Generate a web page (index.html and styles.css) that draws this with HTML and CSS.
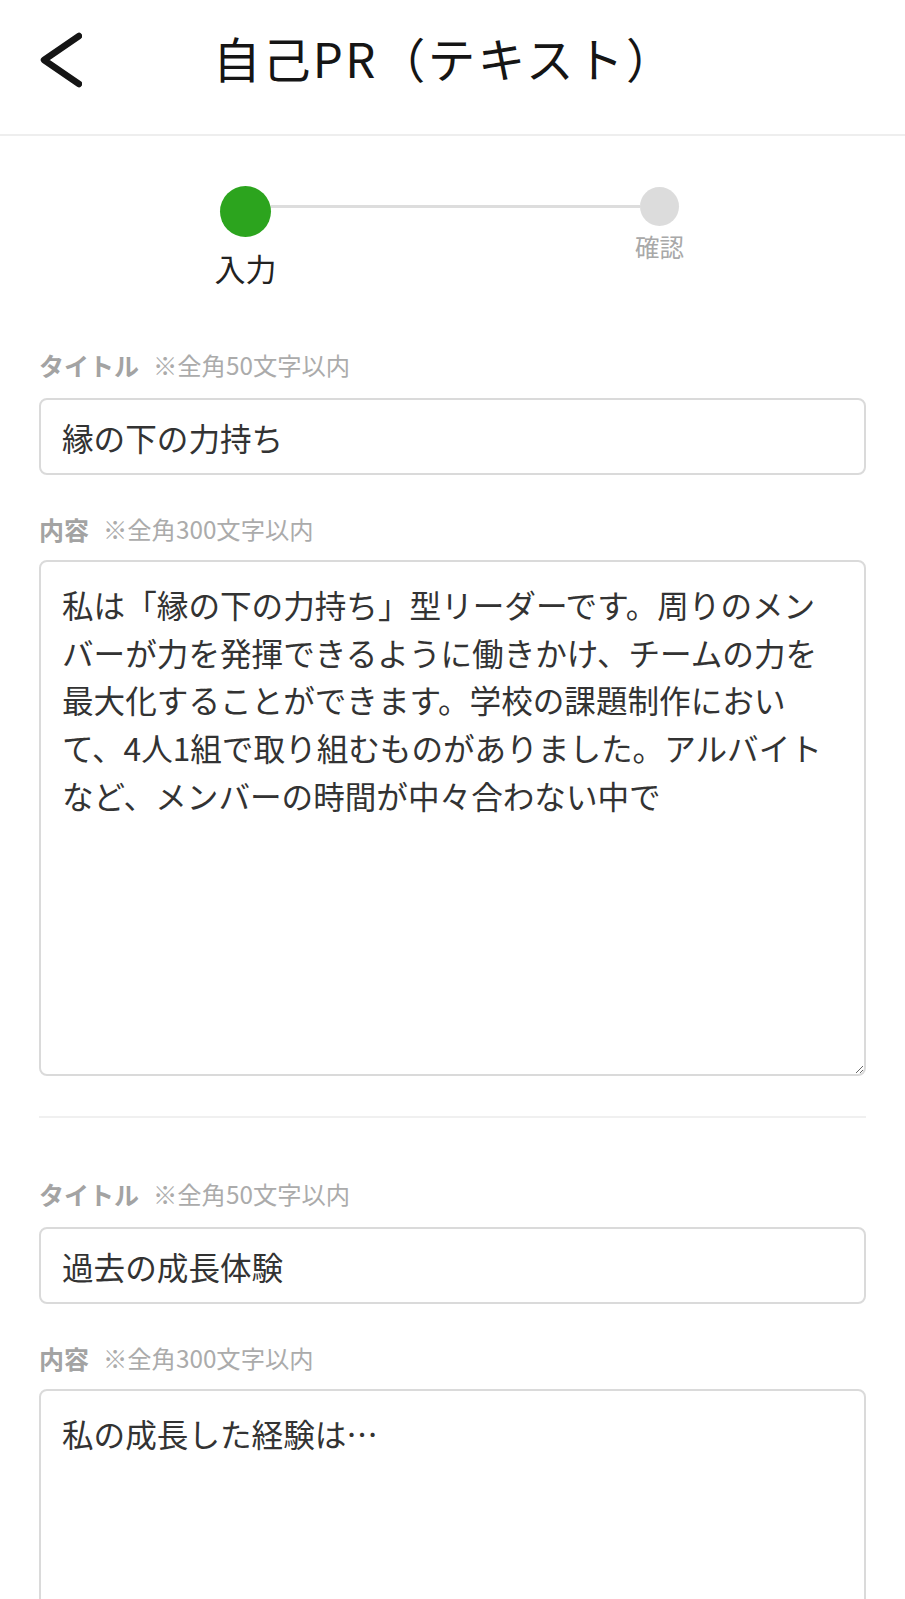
FILE: index.html
```html
<!DOCTYPE html>
<html lang="ja">
<head>
<meta charset="utf-8">
<title>自己PR（テキスト）</title>
<link rel="stylesheet" href="styles.css">
</head>
<body>
<header class="header">
  <svg class="back" width="44" height="60" viewBox="0 0 44 60" aria-hidden="true">
    <path d="M41 6 L6 30 L41 54" fill="none" stroke="#151515" stroke-width="6.5" stroke-linecap="round" stroke-linejoin="round"/>
  </svg>
  <h1 class="title">自己PR（テキスト）</h1>
</header>

<div class="stepper">
  <div class="step step-active">
    <span class="dot"></span>
    <span class="step-label">入力</span>
  </div>
  <div class="line"></div>
  <div class="step step-next">
    <span class="dot"></span>
    <span class="step-label">確認</span>
  </div>
</div>

<main class="form">
  <section class="entry">
    <div class="field-label label-title label-first"><b>タイトル</b><span class="note">※全角50文字以内</span></div>
    <input class="text-input" type="text" value="縁の下の力持ち">
    <div class="field-label label-content"><b>内容</b><span class="note">※全角300文字以内</span></div>
    <textarea class="text-area">私は「縁の下の力持ち」型リーダーです。周りのメンバーが力を発揮できるように働きかけ、チームの力を最大化することができます。学校の課題制作において、4人1組で取り組むものがありました。アルバイトなど、メンバーの時間が中々合わない中で</textarea>
  </section>
  <hr class="divider">
  <section class="entry">
    <div class="field-label label-title label-first"><b>タイトル</b><span class="note">※全角50文字以内</span></div>
    <input class="text-input" type="text" value="過去の成長体験">
    <div class="field-label label-content"><b>内容</b><span class="note">※全角300文字以内</span></div>
    <textarea class="text-area">私の成長した経験は…</textarea>
  </section>
</main>
</body>
</html>
```

FILE: styles.css
```css
* { box-sizing: border-box; }

html, body {
  margin: 0;
  padding: 0;
  background: #fff;
}

body {
  font-family: "Noto Sans CJK JP", "Noto Sans", sans-serif;
  color: #333;
  width: 905px;
}

.header {
  height: 136px;
  border-bottom: 2px solid #eeeeee;
  display: flex;
  align-items: flex-start;
}

.back {
  margin-left: 38px;
  margin-top: 30px;
  flex: none;
}

.title {
  margin: 0 0 0 131px;
  padding-top: 28px;
  font-size: 47.5px;
  line-height: 60px;
  font-weight: 400;
  letter-spacing: 2.4px;
  color: #151515;
  white-space: nowrap;
}

.stepper {
  display: flex;
  align-items: flex-start;
  margin-left: 220px;
  width: 459px;
  margin-top: 50px;
}

.step {
  display: flex;
  flex-direction: column;
  align-items: center;
  flex: none;
}

.dot {
  display: block;
  border-radius: 50%;
}

.step-active { width: 51px; }
.step-active .dot {
  width: 51px;
  height: 51px;
  background: #2ca41e;
}
.step-active .step-label {
  margin-top: 10px;
  font-size: 31px;
  line-height: 42px;
  color: #222;
  white-space: nowrap;
}

.step-next { width: 39px; margin-top: 1px; }
.step-next .dot {
  width: 39px;
  height: 39px;
  background: #dcdcdc;
}
.step-next .step-label {
  margin-top: 6px;
  font-size: 24.5px;
  line-height: 30px;
  color: #a8a8a8;
  white-space: nowrap;
}

.line {
  flex: 1;
  height: 3px;
  margin-top: 19px;
  background: #dddddd;
}

.form {
  margin-left: 39px;
  width: 827px;
}

.field-label {
  height: 34px;
  line-height: 34px;
  display: flex;
  align-items: center;
  white-space: nowrap;
}

.field-label b {
  font-size: 25px;
  font-weight: 700;
  color: #a3a3a3;
}

.note {
  margin-left: 14px;
  font-size: 24.3px;
  color: #ababab;
}

.label-title { margin-bottom: 16px; }
.label-first { margin-top: 59px; }
.label-content { margin-top: 37px; margin-bottom: 14px; }

.text-input {
  display: block;
  width: 827px;
  height: 77px;
  border: 2px solid #dadada;
  border-radius: 8px;
  padding: 0 21px;
  font-family: inherit;
  font-size: 31.6px;
  color: #333;
  background: #fff;
  outline: none;
  margin: 0;
}

.text-area {
  display: block;
  width: 827px;
  height: 516px;
  border: 2px solid #dadada;
  border-radius: 8px;
  padding: 19px 33px 0 21px;
  font-family: inherit;
  font-size: 31.6px;
  line-height: 47.7px;
  color: #333;
  background: #fff;
  overflow: hidden;
  outline: none;
  resize: vertical;
  margin: 0;
}

.divider {
  border: 0;
  height: 2px;
  background: #f0f0f0;
  margin: 40px 0 0;
}
```
